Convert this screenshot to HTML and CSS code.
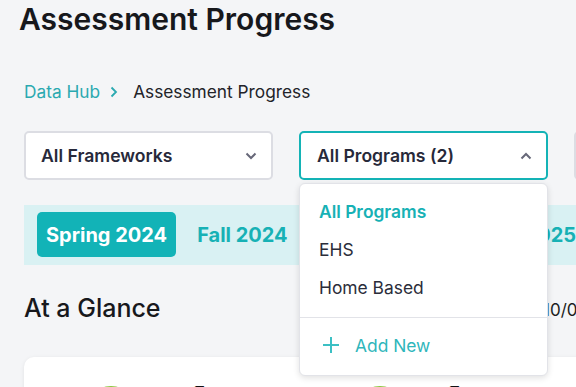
FILE: index.html
```html
<!DOCTYPE html>
<html lang="en">
<head>
    <meta charset="UTF-8">
    <meta name="viewport" content="width=device-width, initial-scale=1.0">
    <title>Assessment Progress</title>
    <link rel="stylesheet" href="styles.css">
</head>
<body>
    <div class="page">
        <h1 class="title">Assessment Progress</h1>

        <nav class="crumbs">
            <a href="#" class="crumb-link">Data Hub</a>
            <svg class="crumb-sep" width="8" height="12" viewBox="0 0 8 12"><path d="M1.5 1.5 6 6l-4.5 4.5" fill="none" stroke="#2aa9b0" stroke-width="1.8"/></svg>
            <span class="crumb-current">Assessment Progress</span>
        </nav>

        <div class="filters">
            <div class="select">
                <span>All Frameworks</span>
                <svg class="caret" width="12" height="8" viewBox="0 0 12 8"><path d="M1.5 1.5 6 6l4.5-4.5" fill="none" stroke="#676879" stroke-width="2"/></svg>
            </div>
            <div class="select-wrap">
                <div class="select open">
                    <span>All Programs (2)</span>
                    <svg class="caret" width="12" height="8" viewBox="0 0 12 8"><path d="M1.5 6.5 6 2l4.5 4.5" fill="none" stroke="#676879" stroke-width="2"/></svg>
                </div>
                <div class="menu">
                    <ul class="menu-list">
                        <li class="menu-item selected">All Programs</li>
                        <li class="menu-item">EHS</li>
                        <li class="menu-item">Home Based</li>
                    </ul>
                    <div class="menu-add">
                        <svg width="18" height="18" viewBox="0 0 18 18"><path d="M9 1v16M1 9h16" stroke="#3cc0c4" stroke-width="2"/></svg>
                        <span>Add New</span>
                    </div>
                </div>
            </div>
            <div class="select disabled">
                <span>All Sites</span>
            </div>
        </div>

        <div class="seasons">
            <button class="season active">Spring 2024</button>
            <button class="season">Fall 2024</button>
            <button class="season">Fall 2025</button>
            <button class="season">Summer 2025</button>
        </div>

        <div class="glance-head">
            <h2 class="glance-title">At a Glance</h2>
            <span class="glance-date">10/01/2024</span>
        </div>

        <div class="card">
            <div class="stat">
                <div class="donut"></div>
                <div class="stat-num">1</div>
            </div>
            <div class="stat">
                <div class="donut"></div>
                <div class="stat-num">1</div>
            </div>
        </div>
    </div>
</body>
</html>
```

FILE: styles.css
```css
body {
    margin: 0;
    background: #f4f5f7;
    font-family: Inter, "Noto Sans", sans-serif;
    color: #1c1d22;
    overflow: hidden;
}

.page {
    width: 760px;
    padding-left: 24px;
}

.title {
    margin: 1px 0 0 -5px;
    font-size: 30px;
    line-height: 36px;
    font-weight: 600;
    color: #17181c;
}

.crumbs {
    display: flex;
    align-items: center;
    margin-top: 43px;
    height: 24px;
    font-size: 17.3px;
    line-height: 24px;
}

.crumb-link {
    color: #2aa9b0;
    text-decoration: none;
}

.crumb-sep {
    margin: 0 15px 0 10px;
}

.crumb-current {
    color: #222329;
}

.filters {
    display: flex;
    gap: 26px;
    margin-top: 27px;
}

.select-wrap {
    position: relative;
}

.select {
    box-sizing: border-box;
    width: 249px;
    height: 49px;
    flex-shrink: 0;
    display: flex;
    align-items: center;
    justify-content: space-between;
    padding: 0 14px 0 15px;
    background: #fff;
    border: 2px solid #dcdde3;
    border-radius: 5px;
    font-size: 17.6px;
    font-weight: 600;
    color: #27293a;
}

.select.open {
    border-color: #14b3b6;
    padding-left: 16px;
}

.select.disabled {
    background: #f0f1f4;
}

.menu {
    position: absolute;
    top: 52px;
    left: 0;
    box-sizing: border-box;
    width: 249px;
    height: 193px;
    background: #fff;
    border: 1px solid #e2e3e8;
    border-radius: 6px;
    box-shadow: 0 2px 6px rgba(0, 0, 0, 0.12);
    z-index: 2;
}

.menu-list {
    list-style: none;
    margin: 0;
    padding: 9px 0 10px;
    border-bottom: 1px solid #e2e3e8;
}

.menu-item {
    padding-left: 19px;
    height: 38px;
    line-height: 37px;
    font-size: 17.4px;
    color: #2b2d3a;
}

.menu-item.selected {
    color: #17b1b5;
    font-weight: 600;
}

.menu-add {
    display: flex;
    align-items: center;
    gap: 15px;
    height: 54px;
    padding-left: 22px;
    font-size: 17.4px;
    color: #2fb6bb;
}

.seasons {
    display: flex;
    gap: 12px;
    margin-top: 25px;
    height: 60px;
    padding: 7px 13px 8px;
    box-sizing: border-box;
    background: #d9f1f3;
    align-items: center;
}

.season {
    height: 45px;
    padding: 0 9px;
    border: none;
    border-radius: 5px;
    background: none;
    font-family: Inter, "Noto Sans", sans-serif;
    font-size: 20px;
    font-weight: 700;
    color: #17b1b5;
    white-space: nowrap;
}

.season.active {
    background: #12b3b7;
    color: #fff;
}

.glance-head {
    display: grid;
    grid-template-columns: 519px auto;
    align-items: center;
    margin-top: 28px;
}

.glance-title {
    margin: 0;
    font-size: 25px;
    line-height: 30px;
    font-weight: 500;
    color: #17181c;
}

.glance-date {
    font-size: 17px;
    padding-top: 4px;
    color: #1c1d22;
}

.card {
    display: flex;
    margin-top: 34px;
    height: 120px;
    background: #fff;
    border-radius: 10px;
    box-shadow: 0 1px 4px rgba(0, 0, 0, 0.08);
    padding: 29px 0 0 61px;
    box-sizing: border-box;
}

.stat {
    display: flex;
    align-items: flex-start;
    width: 269px;
}

.donut {
    width: 44px;
    height: 44px;
    border: 4px solid #8cc63f;
    border-radius: 50%;
}

.stat-num {
    margin: -10px 0 0 50px;
    font-size: 44px;
    line-height: 52px;
    font-weight: 800;
    color: #111;
}

.stat + .stat .stat-num {
    margin-left: 36px;
}
```
